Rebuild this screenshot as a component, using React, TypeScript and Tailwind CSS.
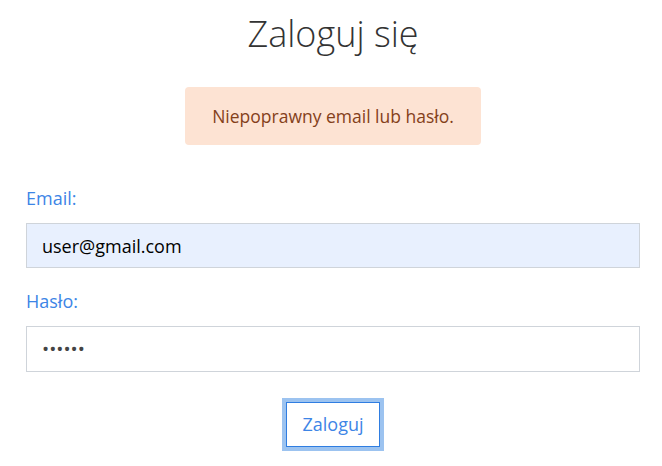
export default function App() {
  return (
    <div className="h-[466px] w-[662px] overflow-hidden bg-white font-['Open_Sans',sans-serif]">
      <div className="ml-[26px] w-[614px]">
        <h1 className="pt-[10px] text-center text-[36px] leading-[48px] font-light text-[#333]">Zaloguj się</h1>

        {/* Error alert */}
        <div className="mx-auto mt-[29px] flex h-[58px] w-[296px] items-center justify-center rounded-[4px] bg-[#fde3d3] text-[17.5px] text-[#84401a]">
          Niepoprawny email lub hasło.
        </div>

        <form>
          <label className="mt-[41px] block text-[18px] leading-[24px] text-[#3d85e6]">Email:</label>
          <input
            type="text"
            defaultValue="user@gmail.com"
            className="mt-[13px] block h-[45px] w-full border border-[#cfd4da] bg-[#e8f0fe] px-[15px] text-[18px] text-black outline-none"
          />

          <label className="mt-[21px] block text-[18px] leading-[24px] text-[#3d85e6]">Hasło:</label>
          <input
            type="password"
            defaultValue="secret"
            className="mt-[13px] block h-[46px] w-full border border-[#cfd4da] bg-white px-[15px] text-[19px] text-[#444] outline-none"
          />

          <div className="mt-[26px] flex justify-center">
            <button
              type="button"
              className="h-[53px] w-[102px] border-[4px] border-[#9cc3f0] bg-white p-0"
            >
              <span className="flex h-full w-full items-center justify-center border border-[#2f7de1] text-[18px] text-[#3d85e6]">
                Zaloguj
              </span>
            </button>
          </div>
        </form>
      </div>
    </div>
  );
}
